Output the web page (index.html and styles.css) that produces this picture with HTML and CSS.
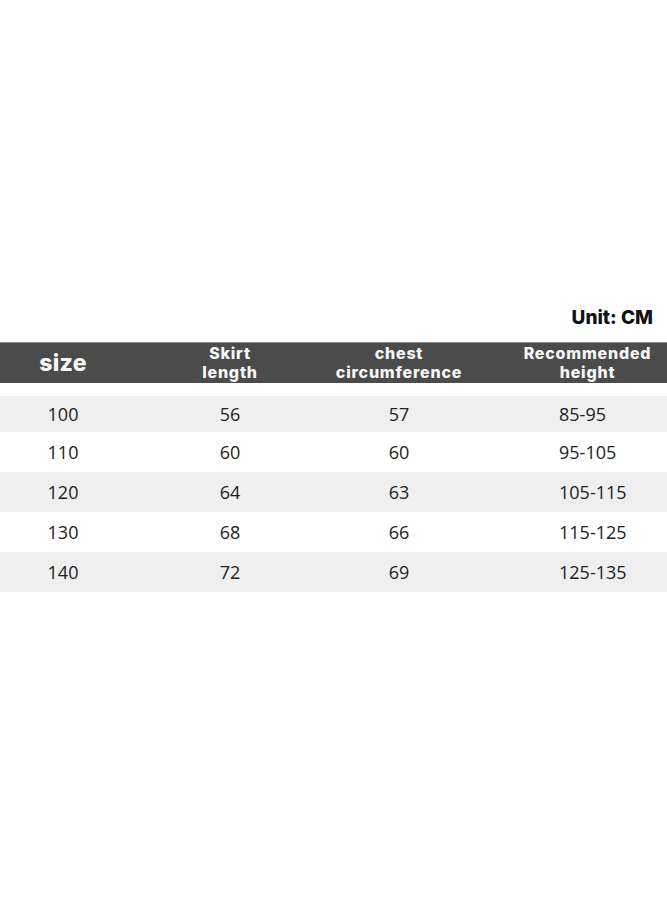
FILE: index.html
```html
<!DOCTYPE html>
<html>
<head>
<meta charset="utf-8">
<link rel="stylesheet" href="styles.css">
</head>
<body>
<div class="page">
  <div class="unit">Unit: CM</div>
  <div class="table">
    <div class="head">
      <div class="hc c1 big">size</div>
      <div class="hc c2">Skirt<br>length</div>
      <div class="hc c3">chest<br>circumference</div>
      <div class="hc c4">Recommended<br>height</div>
    </div>
    <div class="row alt r1"><div class="c1">100</div><div class="c2">56</div><div class="c3">57</div><div class="c4 d4">85-95</div></div>
    <div class="row"><div class="c1">110</div><div class="c2">60</div><div class="c3">60</div><div class="c4 d4">95-105</div></div>
    <div class="row alt"><div class="c1">120</div><div class="c2">64</div><div class="c3">63</div><div class="c4 d4">105-115</div></div>
    <div class="row"><div class="c1">130</div><div class="c2">68</div><div class="c3">66</div><div class="c4 d4">115-125</div></div>
    <div class="row alt"><div class="c1">140</div><div class="c2">72</div><div class="c3">69</div><div class="c4 d4">125-135</div></div>
  </div>
</div>
</body>
</html>
```
FILE: styles.css
```css
html, body {
  margin: 0;
  padding: 0;
  background: #ffffff;
}
.page {
  width: 667px;
  height: 909px;
  padding-top: 306px;
  box-sizing: border-box;
}
.unit {
  text-align: right;
  padding-right: 14px;
  font-family: "Inter", "Liberation Sans", sans-serif;
  font-weight: 800;
  font-size: 19px;
  line-height: 24px;
  color: #111;
  height: 36px;
}
.table {
  display: flex;
  flex-direction: column;
}
.head {
  display: grid;
  grid-template-columns: 126px 208px 130px 1fr;
  align-items: center;
  height: 41px;
  background: #4b4b4b;
  border-top: 1px solid #8a8a8a;
  box-sizing: border-box;
  margin-bottom: 13px;
}
.hc {
  color: #f7f7f7;
  font-family: "Inter", "Liberation Sans", sans-serif;
  font-weight: 800;
  font-size: 16px;
  letter-spacing: 0.8px;
  line-height: 19.5px;
  text-align: center;
}
.hc.big {
  font-size: 23px;
  letter-spacing: 0.3px;
  line-height: 28px;
}
.hc.c4 {
  padding-left: 44px;
}
.row {
  display: grid;
  grid-template-columns: 126px 208px 130px 1fr;
  align-items: center;
  height: 40px;
  font-family: "Open Sans", "Noto Sans", sans-serif;
  font-size: 18px;
  color: #222;
  text-align: center;
}
.row.r1 {
  height: 36px;
}
.row.alt {
  background: #efefef;
}
.d4 {
  text-align: left;
  padding-left: 95px;
}
```
